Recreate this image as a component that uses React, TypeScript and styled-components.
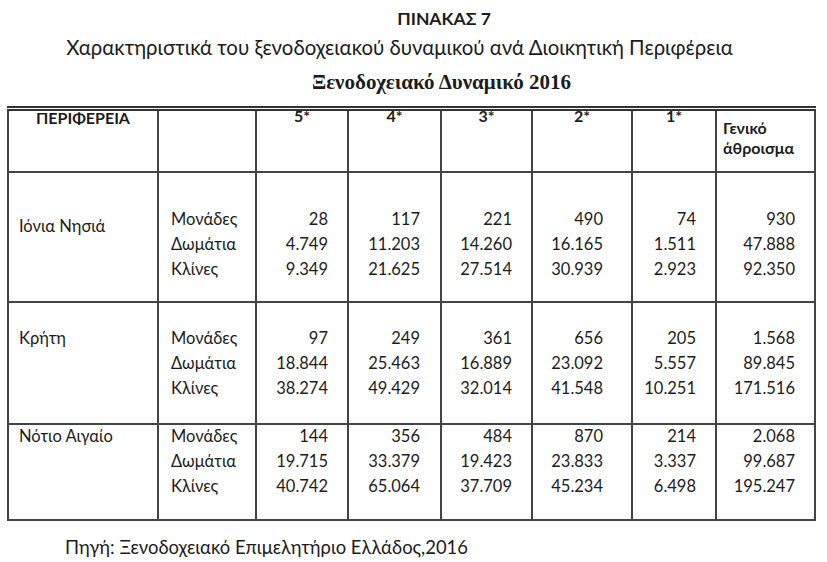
import React from 'react';
import styled, { createGlobalStyle } from 'styled-components';

const Global = createGlobalStyle`
  html, body { margin: 0; padding: 0; background: #ffffff; }
  body {
    width: 827px;
    height: 562px;
    overflow: hidden;
    font-family: Lato, "Noto Sans", "DejaVu Sans", sans-serif;
    color: #1c1c1c;
  }
`;

const Page = styled.div`
  width: 827px;
  height: 562px;
  box-sizing: border-box;
  display: flex;
  flex-direction: column;
  padding-top: 8px;
`;

const Title = styled.div`
  padding-left: 61px;
  text-align: center;
  font-weight: 700;
  font-size: 17.5px;
  line-height: 22px;
`;

const Subtitle = styled.div`
  padding-right: 28px;
  text-align: center;
  font-size: 20.4px;
  line-height: 24px;
  margin-top: 5px;
`;

const Caption = styled.div`
  padding-left: 56px;
  text-align: center;
  font-family: "Liberation Serif", "DejaVu Serif", serif;
  font-weight: 700;
  font-size: 21px;
  line-height: 24px;
  margin-top: 11px;
`;

const Table = styled.table`
  margin-top: 12px;
  margin-left: 7px;
  width: 807px;
  border-collapse: collapse;
  table-layout: fixed;
  border-top: 5px double #333;
  border-left: 2px solid #333;
  border-right: 2px solid #333;
  border-bottom: 2px solid #333;
  font-size: 16.5px;
`;

const Row = styled.tr<{ $h: number }>`
  height: ${(p) => p.$h}px;
`;

const HeadCell = styled.th<{ $align?: string }>`
  border: 2px solid #444;
  vertical-align: top;
  text-align: ${(p) => p.$align || 'center'};
  font-weight: 700;
  font-size: 16px;
  line-height: 20px;
  padding: 0 6px;
`;

const Cell = styled.td<{ $align?: 'left' | 'right'; $pl?: number; $pr?: number }>`
  border: 2px solid #444;
  vertical-align: top;
  text-align: ${(p) => p.$align || 'left'};
  padding: 0 ${(p) => p.$pr ?? 0}px 0 ${(p) => p.$pl ?? 0}px;
  line-height: 25px;
`;

const Stack = styled.div<{ $offset: number }>`
  margin-top: ${(p) => p.$offset}px;
`;

const Line = styled.div`
  white-space: nowrap;
`;

const Source = styled.div`
  margin-top: 15px;
  padding-left: 65px;
  font-size: 18.4px;
  line-height: 22px;
`;

const widths = [150, 98, 92, 93, 91, 100, 84, 99];
const pads = [19, 20, 19, 28, 19, 19];
const labels = ['Μονάδες', 'Δωμάτια', 'Κλίνες'];
const stars = ['5*', '4*', '3*', '2*', '1*'];

type Region = { name: string; h: number; pt: number; namePt: number; cols: string[][] };

const regions: Region[] = [
  {
    name: 'Ιόνια Νησιά',
    h: 130,
    pt: 34,
    namePt: 41,
    cols: [
      ['28', '4.749', '9.349'],
      ['117', '11.203', '21.625'],
      ['221', '14.260', '27.514'],
      ['490', '16.165', '30.939'],
      ['74', '1.511', '2.923'],
      ['930', '47.888', '92.350'],
    ],
  },
  {
    name: 'Κρήτη',
    h: 122,
    pt: 23,
    namePt: 23,
    cols: [
      ['97', '18.844', '38.274'],
      ['249', '25.463', '49.429'],
      ['361', '16.889', '32.014'],
      ['656', '23.092', '41.548'],
      ['205', '5.557', '10.251'],
      ['1.568', '89.845', '171.516'],
    ],
  },
  {
    name: 'Νότιο Αιγαίο',
    h: 96,
    pt: -1,
    namePt: -1,
    cols: [
      ['144', '19.715', '40.742'],
      ['356', '33.379', '65.064'],
      ['484', '19.423', '37.709'],
      ['870', '23.833', '45.234'],
      ['214', '3.337', '6.498'],
      ['2.068', '99.687', '195.247'],
    ],
  },
];

export default function App() {
  return (
    <>
      <Global />
      <Page>
        <Title>ΠΙΝΑΚΑΣ 7</Title>
        <Subtitle>Χαρακτηριστικά του ξενοδοχειακού δυναμικού ανά Διοικητική Περιφέρεια</Subtitle>
        <Caption>Ξενοδοχειακό Δυναμικό 2016</Caption>
        <Table>
          <colgroup>
            {widths.map((w, i) => (
              <col key={i} style={{ width: w }} />
            ))}
          </colgroup>
          <thead>
            <Row $h={63}>
              <HeadCell>
                <Stack $offset={-3}>ΠΕΡΙΦΕΡΕΙΑ</Stack>
              </HeadCell>
              <HeadCell />
              {stars.map((s) => (
                <HeadCell key={s}>
                  <Stack $offset={-5}>{s}</Stack>
                </HeadCell>
              ))}
              <HeadCell $align="left">
                <Stack $offset={7}>
                  Γενικό
                  <br />
                  άθροισμα
                </Stack>
              </HeadCell>
            </Row>
          </thead>
          <tbody>
            {regions.map((r) => (
              <Row key={r.name} $h={r.h}>
                <Cell $pl={10}>
                  <Stack $offset={r.namePt}>{r.name}</Stack>
                </Cell>
                <Cell $pl={12}>
                  <Stack $offset={r.pt}>
                    {labels.map((l) => (
                      <Line key={l}>{l}</Line>
                    ))}
                  </Stack>
                </Cell>
                {r.cols.map((c, i) => (
                  <Cell key={i} $align="right" $pr={pads[i]}>
                    <Stack $offset={r.pt}>
                      {c.map((v, j) => (
                        <Line key={j}>{v}</Line>
                      ))}
                    </Stack>
                  </Cell>
                ))}
              </Row>
            ))}
          </tbody>
        </Table>
        <Source>Πηγή: Ξενοδοχειακό Επιμελητήριο Ελλάδος,2016</Source>
      </Page>
    </>
  );
}
